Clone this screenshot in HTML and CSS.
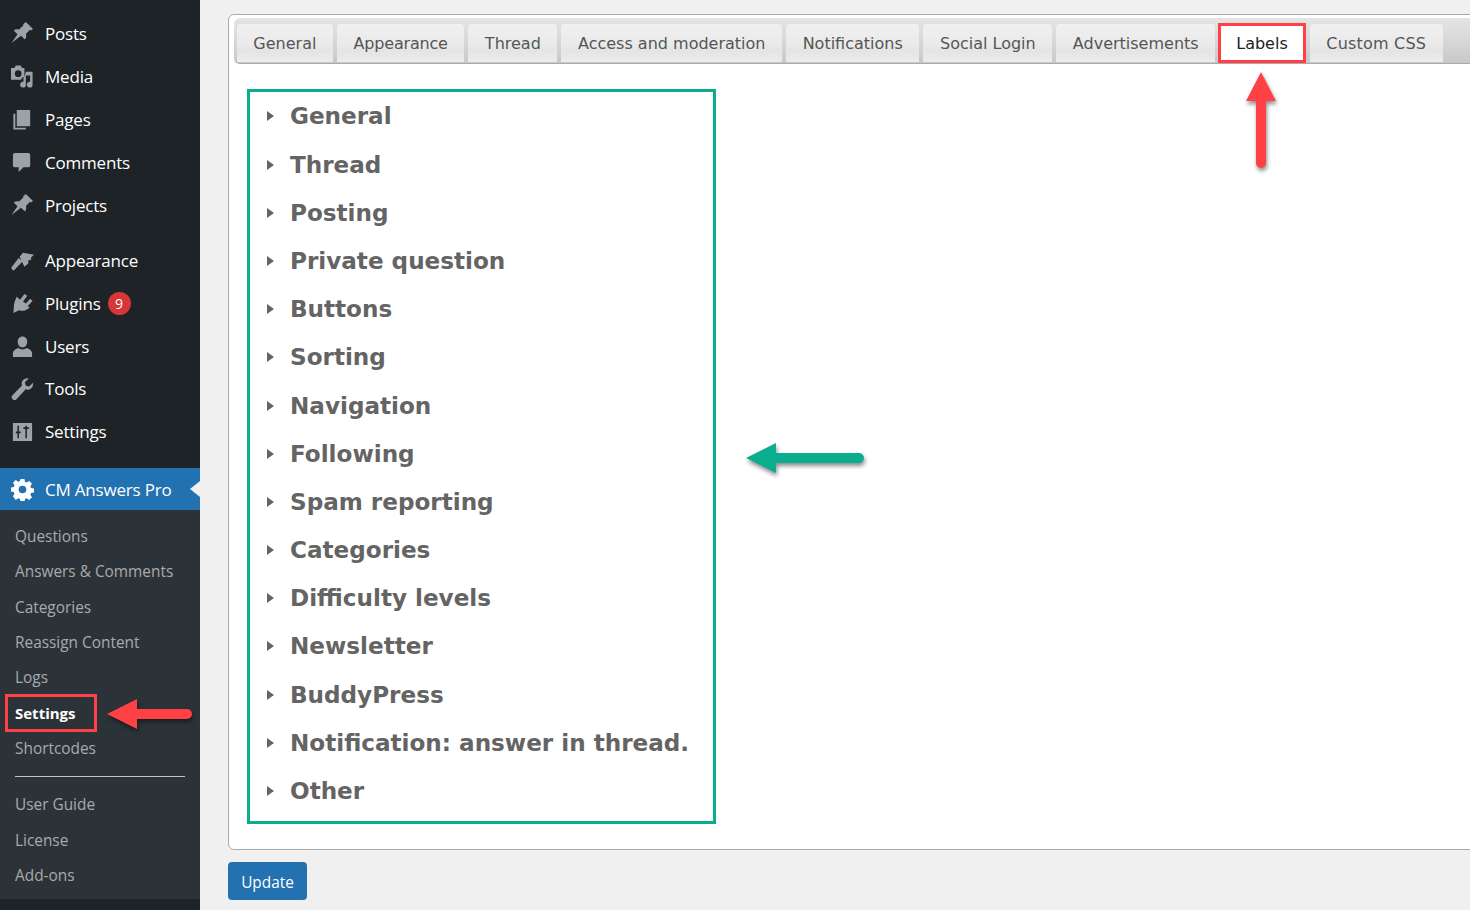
FILE: index.html
```html
<!DOCTYPE html>
<html lang="en">
<head>
<meta charset="utf-8">
<title>CM Answers Pro Settings</title>
<link rel="stylesheet" href="styles.css">
</head>
<body>
<aside class="sidebar">
  <ul class="menu group-a">
    <li><svg class="ico" viewBox="0 0 24 24"><path d="M15.500 0l7.500 7.200-2.200 1.600-1-.6-4.200 4.400c.6 2.200.2 4-1 5.700l-4.200-4L.5 22l6.300-9.300-4-3.900C4.400 7.500 6.400 7.200 8.500 7.800l4.500-4.500-.4-1z"/></svg><span>Posts</span></li>
    <li><svg class="ico" viewBox="0 0 24 24"><path fill-rule="evenodd" d="M0 3h3.500L5 .5h5L11.500 3H14v9l-2.500 1.200-1 2.300H0zM7.500 5.500a3.500 3.500 0 1 0 0 7 3.500 3.500 0 0 0 0-7z"/><path d="M22.500 7v13.500a3 3 0 1 1-2.500-3V11h-4.500v9.500a3 3 0 1 1-2.500-3V13l1.500-2 1-4z"/></svg><span>Media</span></li>
    <li><svg class="ico" viewBox="0 0 24 24"><path d="M6 2h14v17H6zM2.500 6h2v14.500h11v2h-13z"/></svg><span>Pages</span></li>
    <li><svg class="ico" viewBox="0 0 24 24"><path d="M4 2h14q2 0 2 2v11q0 2-2 2h-5l-5 5v-5H4q-2 0-2-2V4q0-2 2-2z"/></svg><span>Comments</span></li>
    <li><svg class="ico" viewBox="0 0 24 24"><path d="M15.500 0l7.500 7.200-2.200 1.600-1-.6-4.200 4.400c.6 2.200.2 4-1 5.700l-4.200-4L.5 22l6.300-9.300-4-3.900C4.400 7.500 6.400 7.200 8.500 7.800l4.500-4.500-.4-1z"/></svg><span>Projects</span></li>
  </ul>
  <ul class="menu group-b">
    <li><svg class="ico" viewBox="0 0 24 24"><path d="M.5 19 8 9.500l4 3.500-9 9.500q-3-.5-2.500-3.500zM9 8l3.500-4L24 6l-3.500 3.500 1 1.500-3.500 1v3l-4 3.500z"/></svg><span>Appearance</span></li>
    <li class="plugins"><svg class="ico" viewBox="0 0 24 24"><path d="M6 5l3.500 3L14 2l3 2-4.500 6 3 2 4.500-5 2.500 2.500-5 5 2 2-2.500 1.500c-3 2-6 2-8.500 1l-6 3 .5-7c0-3 1-6 3-10z"/></svg><span>Plugins</span><b class="count">9</b></li>
    <li><svg class="ico" viewBox="0 0 24 24"><path d="M12 1.500c3 0 5 2.500 5 5.500s-2 6-5 6-5-3-5-6 2-5.500 5-5.500zM2 23v-4c0-3 4-5 6-5.500 1 1 2.500 1.500 4 1.500s3-.5 4-1.500c2 .5 6 2.500 6 5.500v4z"/></svg><span>Users</span></li>
    <li><svg class="ico" viewBox="0 0 24 24"><path d="M23 6c.6 3-1 6-4 7-1.300.4-2.600.3-3.700-.1L6 23a3 3 0 0 1-4.500-4L11.500 8.800C11 7.500 11 6 11.500 4.800 12.800 2 15.800.7 18.500 1.500l-4 4 1 3.500 3.500 1z"/></svg><span>Tools</span></li>
    <li><svg class="ico" viewBox="0 0 24 24"><path fill-rule="evenodd" d="M2 3h20v19H2zM6.700 6v6H5v1.800h1.700V19h1.600v-5.200H10V12H8.300V6zM15 6v1.500h-2v1.800h2V19h1.600V9.300h2V7.500h-2V6z"/></svg><span>Settings</span></li>
  </ul>
  <div class="current">
    <svg class="ico gear" viewBox="0 0 24 24"><path fill-rule="evenodd" d="M10 1h4l.6 3 1.800.8 2.600-1.700 2.900 2.900-1.700 2.600.8 1.800 3 .6v4l-3 .6-.8 1.800 1.700 2.600-2.900 2.900-2.600-1.700-1.800.8-.6 3h-4l-.6-3-1.800-.8-2.600 1.700L2 19l1.700-2.600-.8-1.800-3-.6v-4l3-.6.8-1.800L2 5l2.900-2.900 2.600 1.700 1.800-.8zM12 8a4 4 0 1 0 0 8 4 4 0 0 0 0-8z"/></svg>
    <span>CM Answers Pro</span>
  </div>
  <ul class="submenu">
    <li>Questions</li>
    <li>Answers &amp; Comments</li>
    <li>Categories</li>
    <li>Reassign Content</li>
    <li>Logs</li>
    <li class="sel">Settings</li>
    <li>Shortcodes</li>
    <li class="sep"></li>
    <li>User Guide</li>
    <li>License</li>
    <li>Add-ons</li>
  </ul>
  <svg class="arrow arrow-left-red" viewBox="0 0 95 40"><path d="M5 20 35 5v10h50a5 5 0 0 1 0 10H35v10z"/></svg>
</aside>
<main class="content">
  <section class="panel">
    <nav class="tabs">
      <a>General</a>
      <a class="tight">Appearance</a>
      <a>Thread</a>
      <a>Access and moderation</a>
      <a>Notifications</a>
      <a>Social Login</a>
      <a>Advertisements</a>
      <a class="active">Labels</a>
      <a class="wide">Custom CSS</a>
    </nav>
    <div class="labels">
      <h3>General</h3>
      <h3>Thread</h3>
      <h3>Posting</h3>
      <h3>Private question</h3>
      <h3>Buttons</h3>
      <h3>Sorting</h3>
      <h3>Navigation</h3>
      <h3>Following</h3>
      <h3>Spam reporting</h3>
      <h3>Categories</h3>
      <h3>Difficulty levels</h3>
      <h3>Newsletter</h3>
      <h3>BuddyPress</h3>
      <h3>Notification: answer in thread.</h3>
      <h3>Other</h3>
    </div>
    <svg class="arrow arrow-up" viewBox="0 0 40 101"><path d="M20 3 35 32H25v62a5 5 0 0 1-10 0V32H5z"/></svg>
    <svg class="arrow arrow-green" viewBox="0 0 134 40"><path d="M4 20 34 5v10h83a5 5 0 0 1 0 10H34v10z"/></svg>
  </section>
  <button class="update" type="button">Update</button>
</main>
</body>
</html>
```
FILE: styles.css
```css
*, *::before, *::after { box-sizing: border-box; }
html, body { margin: 0; height: 910px; overflow: hidden; }
body {
  display: flex;
  background: #f0f0f1;
  font-family: "Open Sans", "Noto Sans", sans-serif;
}
ul { list-style: none; margin: 0; padding: 0; }

.sidebar {
  position: relative;
  flex: 0 0 200px;
  height: 910px;
  background: #1d2327;
  color: #f0f0f1;
  font-size: 17px;
}
.menu li {
  display: flex;
  align-items: center;
  height: 42.800px;
  padding-left: 11px;
  color: #fff;
}
.menu span { margin-left: 11px; letter-spacing: -0.2px; }
.group-a { padding-top: 12.500px; }
.group-b { padding-top: 12.700px; }
.ico { flex: 0 0 23px; width: 23px; height: 23px; fill: #9ca2a7; }
.count {
  display: flex;
  align-items: center;
  justify-content: center;
  width: 23px;
  height: 23px;
  margin-left: 7px;
  border-radius: 50%;
  background: #d63638;
  color: #fff;
  font-size: 14px;
  font-weight: 400;
}
.current {
  display: flex;
  align-items: center;
  height: 42px;
  margin-top: 15px;
  padding-left: 11px;
  background: #2271b1;
  color: #fff;
  position: relative;
}
.current span { margin-left: 11px; letter-spacing: -0.2px; }
.current::after {
  content: "";
  position: absolute;
  right: 0;
  top: 13px;
  border: 8px solid transparent;
  border-left-width: 0;
  border-right: 10px solid #f0f0f1;
}
.gear { fill: #fff; }
.submenu {
  height: 389px;
  padding-top: 8.500px;
  background: #2c3338;
  color: #a7aaad;
  font-size: 15.400px;
}
.submenu li {
  display: flex;
  align-items: center;
  height: 35.350px;
  padding-left: 15px;
}
.submenu .sel {
  position: relative;
  color: #fff;
  font-size: 15px;
  font-weight: 700;
}
.submenu .sel::after {
  content: "";
  position: absolute;
  left: 5px;
  top: -1px;
  width: 92px;
  height: 38px;
  border: 3px solid #ff4146;
}
.submenu .sep {
  height: 1px;
  margin: 10px 15px 10px;
  padding: 0;
  background: #c3c4c7;
}

.content { flex: 1; min-width: 0; padding: 14px 0 0 28px; }
.panel {
  position: relative;
  width: 1260px;
  height: 836px;
  padding: 3px 0 0 5px;
  background: #fff;
  border: 1px solid #aaa;
  border-radius: 6px;
}
.tabs {
  display: flex;
  gap: 4px;
  height: 46px;
  padding: 6px 0 0 2.750px;
  background: linear-gradient(to bottom, #e4e4e4, #d8d8d8 50%, #c8c8c8);
  border-bottom: 1px solid #aaa;
  border-radius: 6px 0 0 6px;
  font-family: "DejaVu Sans", Verdana, sans-serif;
  font-size: 16px;
}
.tabs a {
  display: flex;
  align-items: center;
  height: 38px;
  padding: 0 16.600px;
  background: linear-gradient(to bottom, #f0f0f0, #eaeaea 55%, #e4e4e4 70%, #ececec);
  border-radius: 4px 4px 0 0;
  color: #555;
  white-space: nowrap;
}
.tabs .tight { letter-spacing: -0.2px; }
.tabs .wide { letter-spacing: 0.2px; }
.tabs .active {
  margin: -1px 0 0 -1px;
  height: 40px;
  padding: 0 15px;
  background: #fff;
  border: 3px solid #ff4146;
  border-radius: 0;
  color: #222;
}
.labels {
  width: 469px;
  height: 735px;
  margin: 25px 0 0 13px;
  padding-top: 0.300px;
  border: 3px solid #0aae8f;
}
.labels h3 {
  position: relative;
  display: flex;
  align-items: center;
  height: 48.200px;
  margin: 0;
  padding-left: 40px;
  font-family: "DejaVu Sans", Verdana, sans-serif;
  font-size: 23.100px;
  font-weight: 700;
  color: #646464;
  white-space: nowrap;
}
.labels h3::before {
  content: "";
  position: absolute;
  left: 17px;
  top: 50%;
  margin-top: -5px;
  border: 5px solid transparent;
  border-left: 7px solid #646464;
  border-right-width: 0;
}
.arrow { position: absolute; filter: drop-shadow(1px 3px 2px rgba(0,0,0,.45)); }
.arrow-left-red { left: 102px; top: 694px; width: 95px; height: 40px; fill: #ff4146; }
.arrow-up { left: 1012px; top: 54px; width: 40px; height: 101px; fill: #ff4146; }
.arrow-green { left: 513px; top: 423px; width: 134px; height: 40px; fill: #0aae8f; }
.update {
  display: block;
  width: 79px;
  height: 38px;
  margin-top: 12px;
  padding: 2px 0 0;
  background: #2271b1;
  border: 0;
  border-radius: 4px;
  color: #fff;
  font-family: inherit;
  font-size: 15.400px;
}
```
